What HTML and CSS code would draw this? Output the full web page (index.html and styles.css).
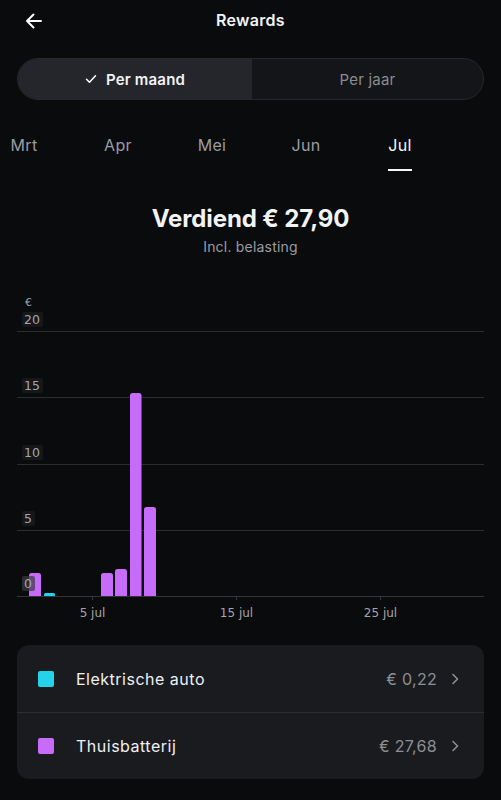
FILE: index.html
```html
<!DOCTYPE html>
<html lang="nl">
<head>
<meta charset="utf-8">
<title>Rewards</title>
<link rel="stylesheet" href="styles.css">
</head>
<body>
<div class="screen">
  <header class="topbar">
    <button class="back" aria-label="Terug">
      <svg width="20" height="20" viewBox="0 0 20 20" fill="none" stroke="#fff" stroke-width="2" stroke-linecap="round" stroke-linejoin="round">
        <path d="M17 10H3M9.5 3.5L3 10l6.5 6.5"/>
      </svg>
    </button>
    <h1 class="title">Rewards</h1>
  </header>

  <div class="segmented">
    <div class="seg seg-active">
      <svg width="12" height="10" viewBox="0 0 12 10" fill="none" stroke="#fff" stroke-width="1.5" stroke-linecap="round" stroke-linejoin="round"><path d="M1.5 5.2l3 3 6-6.4"/></svg>
      <span>Per maand</span>
    </div>
    <div class="seg">Per jaar</div>
  </div>

  <nav class="months">
    <div class="month"><span>Mrt</span></div>
    <div class="month"><span>Apr</span></div>
    <div class="month"><span>Mei</span></div>
    <div class="month"><span>Jun</span></div>
    <div class="month month-active"><span>Jul</span></div>
  </nav>

  <section class="summary">
    <div class="earned">Verdiend € 27,90</div>
    <div class="tax">Incl. belasting</div>
  </section>

  <div class="chart">
    <svg width="501" height="340" viewBox="0 0 501 340">
      <g class="grid" stroke="#2c2d31" stroke-width="1">
        <line x1="17" y1="41.5" x2="484" y2="41.5"/>
        <line x1="17" y1="107.5" x2="484" y2="107.5"/>
        <line x1="17" y1="174.5" x2="484" y2="174.5"/>
        <line x1="17" y1="240.5" x2="484" y2="240.5"/>
      </g>
      <!-- bars: 14.4px per day, 13.3px per euro -->
      <g fill="#c76bfb">
        <path d="M29 306V285.5a2.5 2.5 0 0 1 2.5-2.5h7a2.5 2.5 0 0 1 2.5 2.5V306z"/>
        <path d="M101 306V285.5a2.5 2.5 0 0 1 2.5-2.5h7a2.5 2.5 0 0 1 2.5 2.5V306z"/>
        <path d="M115 306V281.5a2.5 2.5 0 0 1 2.5-2.5h7a2.5 2.5 0 0 1 2.5 2.5V306z"/>
        <path d="M130 306V105.5a2.5 2.5 0 0 1 2.5-2.5h6.5a2.5 2.5 0 0 1 2.5 2.5V306z"/>
        <path d="M144 306V219.5a2.5 2.5 0 0 1 2.5-2.5h7a2.5 2.5 0 0 1 2.5 2.5V306z"/>
      </g>
      <path fill="#22d3ea" d="M44 306v-1.5a1.5 1.5 0 0 1 1.5-1.5h8a1.5 1.5 0 0 1 1.5 1.5V306z"/>
      <g class="axis" stroke="#34353a" stroke-width="1">
        <line x1="17" y1="306.5" x2="484" y2="306.5"/>
        <line x1="92.5" y1="306" x2="92.5" y2="310"/>
        <line x1="236.5" y1="306" x2="236.5" y2="310"/>
        <line x1="380.5" y1="306" x2="380.5" y2="310"/>
      </g>
      <g class="ylabels">
        <text class="unit" x="25" y="16">€</text>
        <rect x="22" y="22" width="21" height="15" rx="2"/>
        <text x="24" y="34">20</text>
        <rect x="22" y="88" width="21" height="15" rx="2"/>
        <text x="24" y="100">15</text>
        <rect x="22" y="155" width="21" height="15" rx="2"/>
        <text x="24" y="167">10</text>
        <rect x="22" y="221" width="13" height="15" rx="2"/>
        <text x="24" y="233">5</text>
        <rect x="22" y="286" width="13" height="15" rx="2" class="over"/>
        <text x="24" y="298">0</text>
      </g>
      <g class="xlabels">
        <text x="92.5" y="327">5 jul</text>
        <text x="236.5" y="327">15 jul</text>
        <text x="380.5" y="327">25 jul</text>
      </g>
    </svg>
  </div>

  <section class="card">
    <div class="row">
      <span class="swatch swatch-car"></span>
      <span class="label">Elektrische auto</span>
      <span class="amount">€ 0,22</span>
      <svg class="chev" width="10" height="14" viewBox="0 0 10 14" fill="none" stroke="#8d8f95" stroke-width="1.6" stroke-linecap="round" stroke-linejoin="round"><path d="M3 2.5L7.5 7 3 11.5"/></svg>
    </div>
    <div class="row">
      <span class="swatch swatch-battery"></span>
      <span class="label">Thuisbatterij</span>
      <span class="amount">€ 27,68</span>
      <svg class="chev" width="10" height="14" viewBox="0 0 10 14" fill="none" stroke="#8d8f95" stroke-width="1.6" stroke-linecap="round" stroke-linejoin="round"><path d="M3 2.5L7.5 7 3 11.5"/></svg>
    </div>
  </section>
</div>
</body>
</html>
```

FILE: styles.css
```css
* {
  box-sizing: border-box;
}

html, body {
  margin: 0;
  padding: 0;
  background: #0a0b0c;
}

body {
  font-family: Inter, "Noto Sans", sans-serif;
  color: #f2f3f5;
  width: 501px;
  height: 800px;
  overflow: hidden;
}

.topbar {
  position: relative;
  height: 40px;
  display: flex;
  align-items: center;
  justify-content: center;
}

.back {
  position: absolute;
  left: 23px;
  top: 10px;
  width: 22px;
  height: 22px;
  padding: 0;
  border: 0;
  background: none;
  display: flex;
  align-items: center;
  justify-content: center;
}

.title {
  margin: 0;
  font-size: 16px;
  font-weight: 600;
  letter-spacing: 0.3px;
}

.segmented {
  margin: 18px 17px 0;
  height: 42px;
  display: flex;
  border: 1px solid #26282c;
  border-radius: 21px;
  overflow: hidden;
  background: #141518;
}

.seg {
  flex: 1;
  display: flex;
  align-items: center;
  justify-content: center;
  gap: 9px;
  font-size: 15px;
  letter-spacing: 0.2px;
  color: #8a8c92;
}

.seg-active {
  flex: 0 0 234px;
  background: #24262b;
  color: #f2f3f5;
  font-weight: 600;
}

.months {
  display: flex;
  margin: 34px 0 0 -23px;
  height: 37px;
}

.month {
  flex: 0 0 94px;
  display: flex;
  justify-content: center;
  font-size: 16px;
  letter-spacing: 0.3px;
  color: #9a9ca2;
}

.month span {
  display: block;
  line-height: 22px;
  height: 37px;
}

.month-active {
  color: #f7f8f9;
}

.month-active span {
  border-bottom: 2px solid #f7f8f9;
}

.summary {
  margin-top: 33px;
  text-align: center;
}

.earned {
  font-size: 24px;
  font-weight: 700;
  line-height: 30px;
  letter-spacing: -0.1px;
}

.tax {
  margin-top: 4px;
  font-size: 14px;
  line-height: 18px;
  letter-spacing: 0.2px;
  color: #9a9ca2;
}

.chart {
  margin-top: 34px;
  height: 340px;
}

.chart svg {
  display: block;
}

.ylabels text,
.xlabels text {
  font-family: "DejaVu Sans", "Liberation Sans", sans-serif;
  font-size: 12.5px;
  fill: #a3a5ab;
}

.xlabels text {
  font-size: 12px;
  text-anchor: middle;
}

.ylabels .unit {
  font-size: 11px;
}

.ylabels rect {
  fill: #16171a;
}

.ylabels rect.over {
  fill: #3a3b40;
  opacity: 0.7;
}

.card {
  margin: 15px 17px 0;
  background: #1a1b1f;
  border-radius: 12px;
  overflow: hidden;
}

.row {
  height: 67px;
  display: flex;
  align-items: center;
  padding: 0 24px 0 21px;
}

.row + .row {
  border-top: 1px solid #2d2e33;
}

.swatch {
  width: 16px;
  height: 16px;
  border-radius: 2px;
  flex: 0 0 16px;
}

.swatch-car {
  background: #22d3ea;
}

.swatch-battery {
  background: #c76bfb;
}

.label {
  margin-left: 22px;
  flex: 1;
  font-size: 16px;
  letter-spacing: 0.5px;
  color: #eff0f2;
}

.amount {
  font-size: 16px;
  letter-spacing: 0.3px;
  color: #8d8f95;
}

.chev {
  margin-left: 13px;
}
```
